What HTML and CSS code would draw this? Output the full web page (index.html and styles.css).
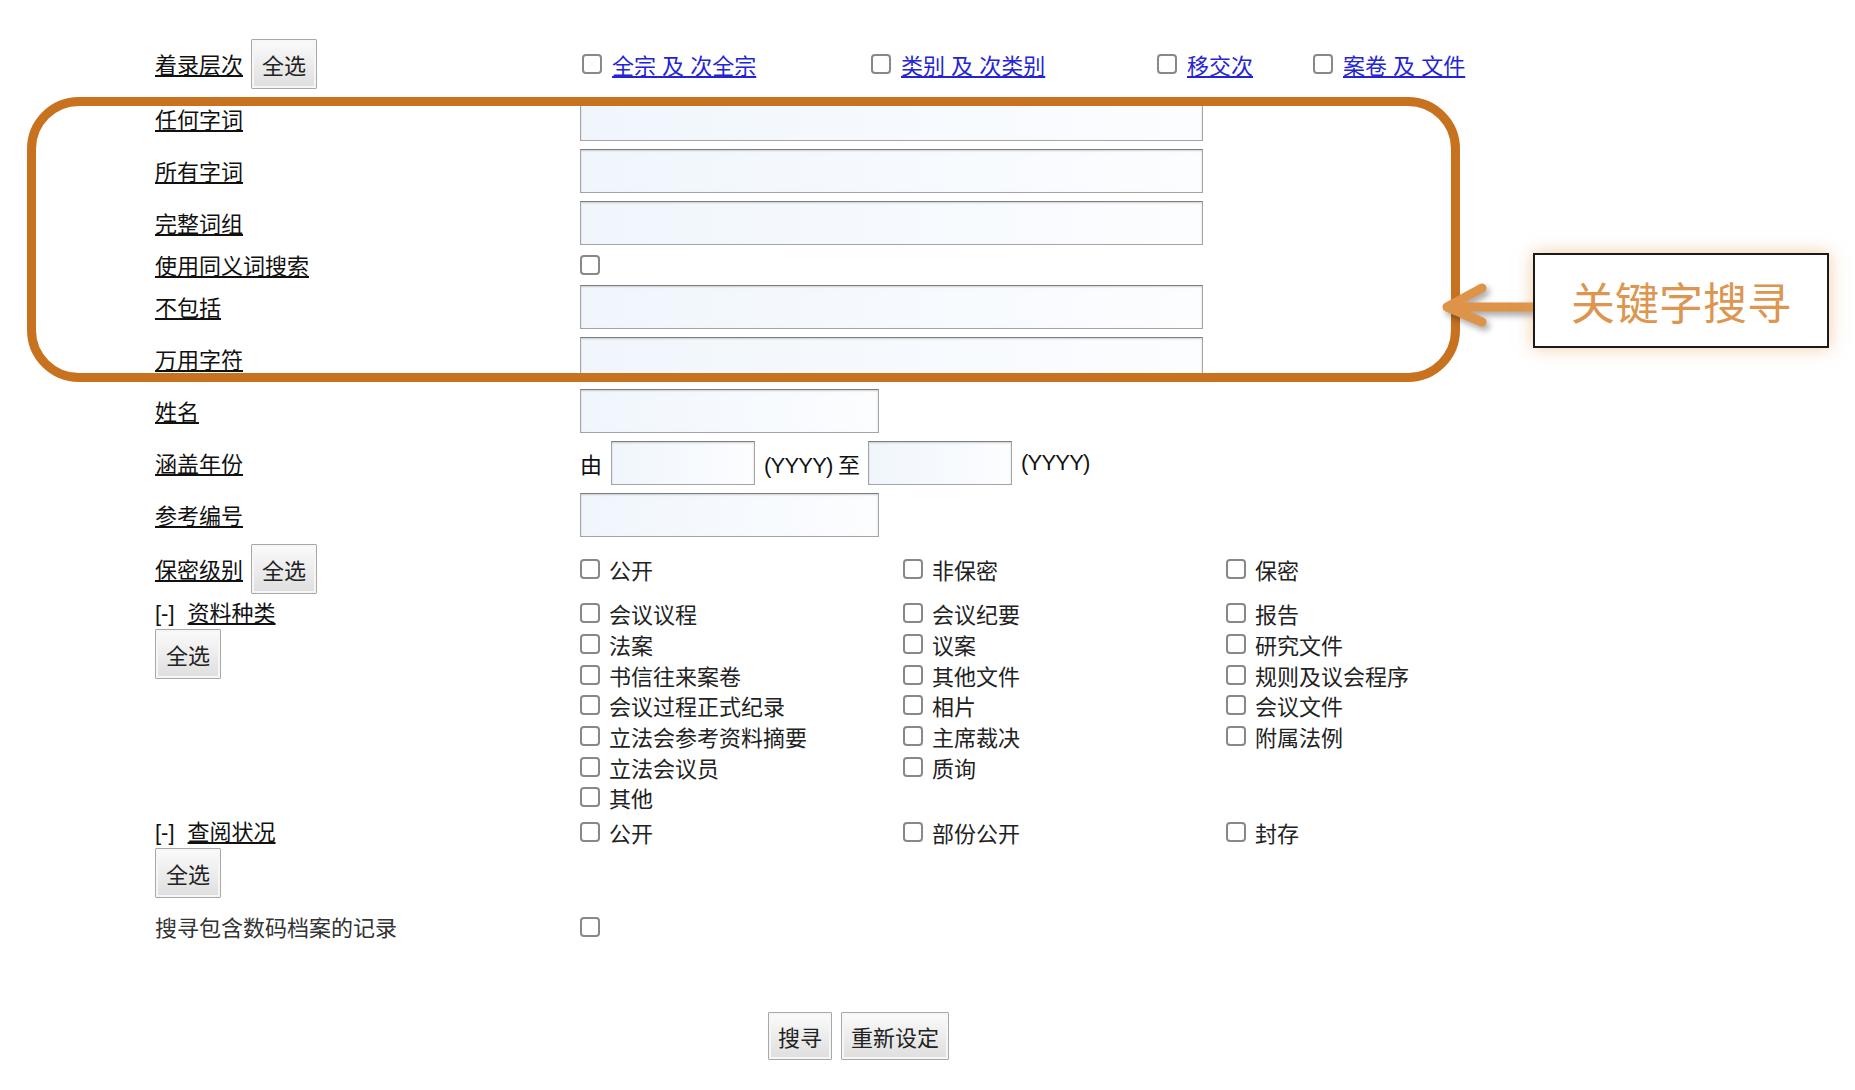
FILE: index.html
```html
<!DOCTYPE html>
<html lang="zh-CN">
<head>
    <meta charset="UTF-8">
    <title>档案搜寻</title>
    <link rel="stylesheet" href="styles.css">
</head>
<body>

<div class="page">
    <form class="search-form">
        <div class="row">
            <div class="label"><span class="term">着录层次</span><button type="button" class="btn">全选</button></div>
            <div class="levels">
                <label class="lv lv1"><input type="checkbox"><a href="#">全宗 及 次全宗</a></label>
                <label class="lv lv2"><input type="checkbox"><a href="#">类别 及 次类别</a></label>
                <label class="lv lv3"><input type="checkbox"><a href="#">移交次</a></label>
                <label class="lv"><input type="checkbox"><a href="#">案卷 及 文件</a></label>
            </div>
        </div>
        <div class="row">
            <div class="label"><span class="term">任何字词</span></div>
            <input type="text" class="txt w-long">
        </div>
        <div class="row">
            <div class="label"><span class="term">所有字词</span></div>
            <input type="text" class="txt w-long">
        </div>
        <div class="row">
            <div class="label"><span class="term">完整词组</span></div>
            <input type="text" class="txt w-long">
        </div>
        <div class="row">
            <div class="label"><span class="term">使用同义词搜索</span></div>
            <input type="checkbox">
        </div>
        <div class="row">
            <div class="label"><span class="term">不包括</span></div>
            <input type="text" class="txt w-long">
        </div>
        <div class="row">
            <div class="label"><span class="term">万用字符</span></div>
            <input type="text" class="txt w-long">
        </div>
        <div class="row">
            <div class="label"><span class="term">姓名</span></div>
            <input type="text" class="txt w-mid">
        </div>
        <div class="row">
            <div class="label"><span class="term">涵盖年份</span></div>
            <div class="years">
                <span>由</span>
                <input type="text" class="txt w-year">
                <span class="fmt">(YYYY) 至</span>
                <input type="text" class="txt w-year">
                <span class="fmt">(YYYY)</span>
            </div>
        </div>
        <div class="row">
            <div class="label"><span class="term">参考编号</span></div>
            <input type="text" class="txt w-mid">
        </div>
        <div class="row row-secret">
            <div class="label"><span class="term">保密级别</span><button type="button" class="btn">全选</button></div>
            <div class="opts">
                <label class="opt"><input type="checkbox">公开</label>
                <label class="opt"><input type="checkbox">非保密</label>
                <label class="opt"><input type="checkbox">保密</label>
            </div>
        </div>
        <div class="row top row-types">
            <div class="label stack">
                <div class="label-line"><span class="toggle">[-]</span><span class="term">资料种类</span></div>
                <button type="button" class="btn">全选</button>
            </div>
            <div class="opts">
                <label class="opt"><input type="checkbox">会议议程</label>
                <label class="opt"><input type="checkbox">会议纪要</label>
                <label class="opt"><input type="checkbox">报告</label>
                <label class="opt"><input type="checkbox">法案</label>
                <label class="opt"><input type="checkbox">议案</label>
                <label class="opt"><input type="checkbox">研究文件</label>
                <label class="opt"><input type="checkbox">书信往来案卷</label>
                <label class="opt"><input type="checkbox">其他文件</label>
                <label class="opt"><input type="checkbox">规则及议会程序</label>
                <label class="opt"><input type="checkbox">会议过程正式纪录</label>
                <label class="opt"><input type="checkbox">相片</label>
                <label class="opt"><input type="checkbox">会议文件</label>
                <label class="opt"><input type="checkbox">立法会参考资料摘要</label>
                <label class="opt"><input type="checkbox">主席裁决</label>
                <label class="opt"><input type="checkbox">附属法例</label>
                <label class="opt"><input type="checkbox">立法会议员</label>
                <label class="opt"><input type="checkbox">质询</label>
                <span></span>
                <label class="opt"><input type="checkbox">其他</label>
            </div>
        </div>
        <div class="row top row-access">
            <div class="label stack">
                <div class="label-line"><span class="toggle">[-]</span><span class="term">查阅状况</span></div>
                <button type="button" class="btn">全选</button>
            </div>
            <div class="opts">
                <label class="opt"><input type="checkbox">公开</label>
                <label class="opt"><input type="checkbox">部份公开</label>
                <label class="opt"><input type="checkbox">封存</label>
            </div>
        </div>
        <div class="row row-digital">
            <div class="label plain">搜寻包含数码档案的记录</div>
            <input type="checkbox">
        </div>

        <div class="actions">
            <button type="submit" class="btn btn-small">搜寻</button>
            <button type="reset" class="btn btn-small">重新设定</button>
        </div>
    </form>

    <!-- annotation layer -->
    <div class="highlight"></div>
    <svg class="arrow" viewBox="0 0 110 60">
        <path d="M98 32 H12 M47 13 L12 32 L47 47" />
    </svg>
    <div class="callout">关键字搜寻</div>
</div>

</body>
</html>
```

FILE: styles.css
```css
/* Umum */
* {
    box-sizing: border-box;
}

body {
    margin: 0;
    background: #fff;
    color: #111;
    font-family: "Liberation Sans", "Noto Sans CJK SC", sans-serif;
    font-size: 22px;
}

.page {
    position: relative;
    width: 1855px;
    height: 1090px;
    overflow: hidden;
}

/* Form */
.search-form {
    padding: 39px 0 0 155px;
}

.row {
    display: flex;
    align-items: center;
    margin-top: 8px;
}

.row:first-child {
    margin-top: 0;
}

.row.top {
    align-items: flex-start;
}

.row-secret {
    margin-top: 7px;
}

.row-types {
    margin-top: 4px;
}

.row-access {
    margin-top: 4px;
}

.row-digital {
    margin-top: 17px;
}

.label {
    width: 425px;
    flex: none;
    display: flex;
    align-items: center;
    gap: 8px;
    padding-top: 3px;
    line-height: 21px;
}

.label.stack {
    flex-direction: column;
    align-items: flex-start;
    gap: 0;
    padding-top: 0;
}

.label.plain {
    color: #333;
}

.label-line {
    display: flex;
    align-items: center;
    height: 30.7px;
}

.toggle {
    margin-right: 13px;
}

.term {
    text-decoration: underline;
}

/* Buttons */
.btn {
    height: 50px;
    margin: 0;
    padding: 0 10px;
    font: inherit;
    line-height: normal;
    color: #222;
    border: 1px solid #a8a8a8;
    border-radius: 1px;
    background: linear-gradient(#fbfbfb, #dedede);
    box-shadow: inset 0 0 0 2px #f6f6f6;
    cursor: pointer;
}

.label .btn {
    margin-top: -3px;
}

.label.stack .btn {
    margin-top: 0;
}

.btn-small {
    height: 48px;
    padding: 0 9px;
}

/* Inputs */
input[type="checkbox"] {
    appearance: none;
    width: 20px;
    height: 20px;
    margin: 0;
    flex: none;
    border: 2px solid #888;
    border-radius: 4px;
    background: #fff;
}

.txt {
    height: 44px;
    margin: 0;
    padding: 0 4px;
    font: inherit;
    border: 1px solid #a4a4a4;
    border-top-color: #7e7e7e;
    box-shadow: inset 0 1px 2px rgba(0, 0, 0, 0.18);
    background: linear-gradient(to right, #f0f6fc, #fcfdff);
}

.w-long {
    width: 623px;
}

.w-mid {
    width: 299px;
}

.w-year {
    width: 144px;
}

.years {
    display: flex;
    align-items: center;
    gap: 9px;
}

.fmt {
    letter-spacing: -0.8px;
}

/* Level options */
.levels {
    display: flex;
}

.lv {
    display: flex;
    align-items: center;
    gap: 10px;
    padding-left: 2px;
}

.lv1 { width: 289px; }
.lv2 { width: 286px; }
.lv3 { width: 156px; }

.lv a {
    color: #2424d4;
    text-decoration: underline;
}

/* Checkbox grid */
.opts {
    display: grid;
    grid-template-columns: repeat(3, 323px);
}

.opt {
    display: flex;
    align-items: center;
    gap: 9px;
    height: 30.7px;
    color: #222;
}

.actions {
    display: flex;
    gap: 9px;
    margin: 73px 0 0 613px;
}

/* Annotation */
.highlight {
    position: absolute;
    left: 27px;
    top: 97px;
    width: 1433px;
    height: 285px;
    border: 9px solid #c8711f;
    border-radius: 52px;
    pointer-events: none;
}

.arrow {
    position: absolute;
    left: 1435px;
    top: 275px;
    width: 110px;
    height: 60px;
    overflow: visible;
    filter: drop-shadow(3px 4px 3px rgba(0, 0, 0, 0.35));
}

.arrow path {
    fill: none;
    stroke: #de9448;
    stroke-width: 9;
    stroke-linecap: round;
    stroke-linejoin: round;
}

.callout {
    position: absolute;
    left: 1533px;
    top: 253px;
    width: 296px;
    height: 95px;
    display: flex;
    align-items: center;
    justify-content: center;
    background: #fff;
    border: 2px solid #1a1a1a;
    box-shadow: 0 0 16px rgba(232, 160, 90, 0.55);
    color: #dc9650;
    font-family: "Noto Sans CJK SC", sans-serif;
    font-size: 44px;
}
```
